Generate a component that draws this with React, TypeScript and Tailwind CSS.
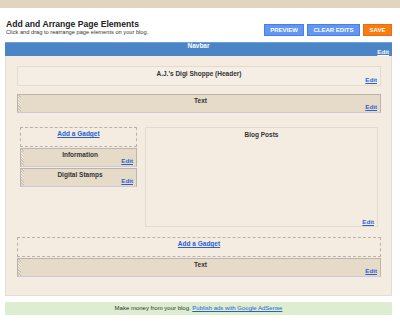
const font = "font-['Liberation_Sans',Arial,sans-serif]"

function EditLink({ className = 'text-[#2a5fd0]' }: { className?: string }) {
  return (
    <a href="#" className={`text-[6.2px] font-bold underline ${className}`}>
      Edit
    </a>
  )
}

function Gadget({ title, handle = true }: { title: string; handle?: boolean }) {
  return (
    <div className="flex h-[19px] border border-[#bcb3aa] border-b-[#cfc8d6] bg-[#e6dbc8]">
      {handle && (
        <div className="w-[3px] shrink-0 bg-[repeating-linear-gradient(45deg,#cfc6bb_0_1px,#ece5da_1px_2px)]" />
      )}
      <div className="flex flex-1 flex-col px-[3px] pt-[2px]">
        <p className="text-center text-[6.5px] leading-[7px] font-bold text-[#333]">{title}</p>
        <div className="mt-auto flex justify-end pb-[2px] leading-[6px]">
          <EditLink />
        </div>
      </div>
    </div>
  )
}

function AddGadget() {
  return (
    <div className="flex h-[20px] justify-center border border-dashed border-[#b8b2ab] pt-[2px]">
      <a href="#" className="text-[6.5px] leading-[7px] font-bold text-[#2a5fd0] underline">
        Add a Gadget
      </a>
    </div>
  )
}

export default function App() {
  return (
    <div className={`h-[326px] w-[400px] overflow-hidden bg-white ${font}`}>
      <div className="h-[8px] bg-[#e3d4c0]" />

      <div className="flex items-start justify-between pt-[11px] pr-[8px] pl-[6px]">
        <div>
          <h1 className="text-[8.6px] leading-[10px] font-bold text-[#222]">
            Add and Arrange Page Elements
          </h1>
          <p className="text-[5.7px] leading-[7px] text-[#333]">
            Click and drag to rearrange page elements on your blog.
          </p>
        </div>
        <div className="mt-[5px] flex gap-[3px]">
          <button className="h-[12px] w-[40px] border border-[#4a7ee0] bg-[#6296f2] text-[6px] font-bold text-white">
            PREVIEW
          </button>
          <button className="h-[12px] w-[53px] border border-[#4a7ee0] bg-[#6296f2] text-[6px] font-bold text-white">
            CLEAR EDITS
          </button>
          <button className="h-[12px] w-[29px] border border-[#e8700a] bg-[#f97b12] text-[6px] font-bold text-white">
            SAVE
          </button>
        </div>
      </div>

      <div className="mt-[6px] mr-[8px] ml-[5px]">
        <div className="h-[14px] overflow-hidden border-t border-[#6d9fd8] bg-[#4b85c6] px-[3px]">
          <p className="text-center text-[6.5px] leading-[6px] font-bold text-white">Navbar</p>
          <div className="flex justify-end leading-[6px]">
            <EditLink className="text-white" />
          </div>
        </div>

        <div className="h-[240px] border-x border-b border-[#e4ddd4] bg-[#f4ece1] pt-[10px] pr-[10px] pl-[11px]">
          <div className="flex h-[20px] flex-col border border-[#e2dbd1] bg-[#f5eee5] px-[3px] pt-[3px]">
            <p className="text-center text-[6.5px] leading-[7px] font-bold text-[#333]">
              A.J.'s Digi Shoppe (Header)
            </p>
            <div className="mt-auto flex justify-end pb-[2px] leading-[6px]">
              <EditLink />
            </div>
          </div>

          <div className="mt-[8px]">
            <Gadget title="Text" />
          </div>

          <div className="mt-[14px] flex gap-[8px]">
            <div className="ml-[3px] flex w-[117px] flex-col gap-[1px]">
              <AddGadget />
              <Gadget title="Information" />
              <Gadget title="Digital Stamps" />
            </div>
            <div className="mr-[3px] flex h-[100px] flex-1 flex-col border border-[#e2dbd1] px-[3px] pt-[3px]">
              <p className="text-center text-[6.5px] leading-[7px] font-bold text-[#333]">Blog Posts</p>
              <div className="mt-auto flex justify-end pb-[1px] leading-[6px]">
                <EditLink />
              </div>
            </div>
          </div>

          <div className="mt-[10px]">
            <AddGadget />
          </div>
          <div className="mt-[1px]">
            <Gadget title="Text" />
          </div>
        </div>
      </div>

      <div className="mt-[6px] mr-[8px] ml-[5px] flex h-[13px] items-center justify-center bg-[#dcedd0] text-[6px] text-[#333]">
        <span>
          Make money from your blog.{' '}
          <a href="#" className="text-[#2a5fd0] underline">
            Publish ads with Google AdSense
          </a>
        </span>
      </div>
    </div>
  )
}
